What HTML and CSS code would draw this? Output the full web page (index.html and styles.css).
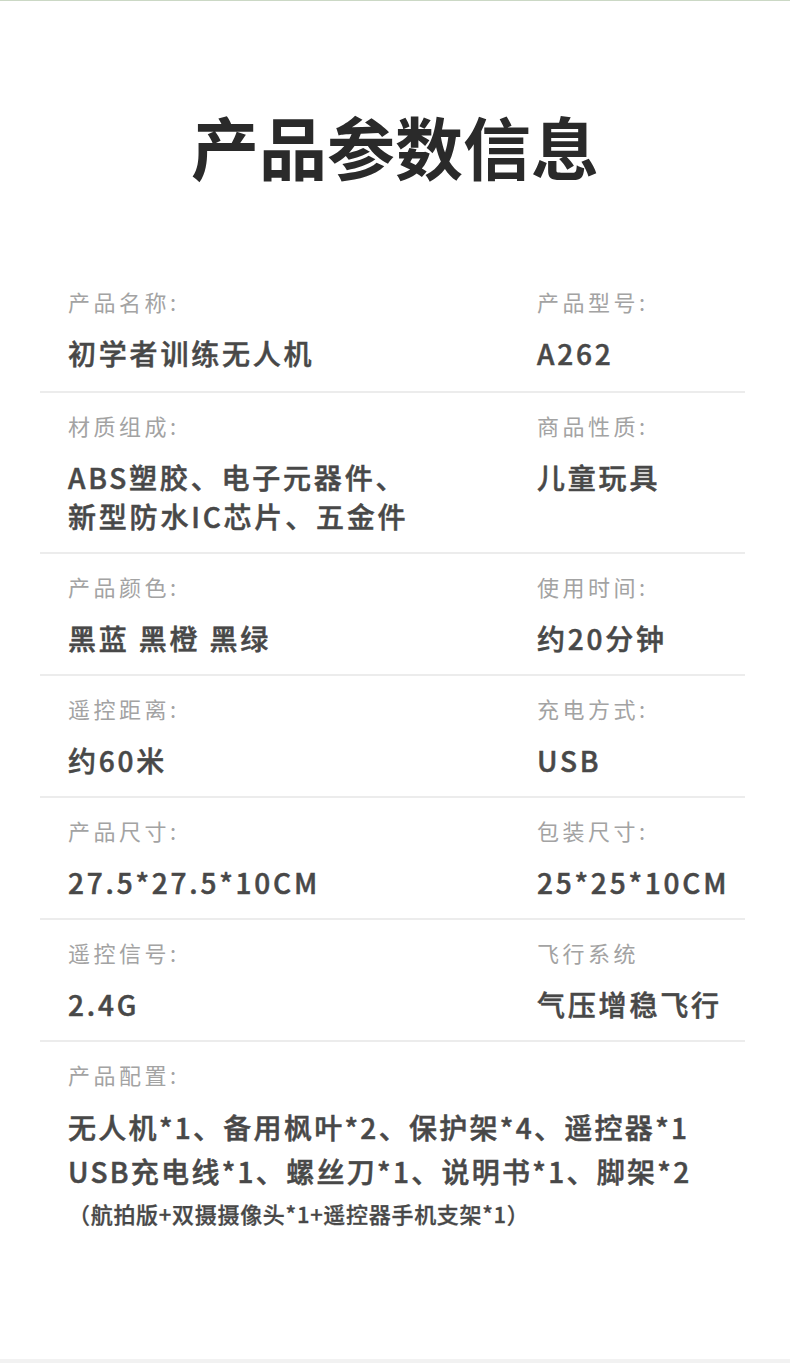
FILE: index.html
```html
<!DOCTYPE html>
<html lang="zh-CN">
<head>
<meta charset="utf-8">
<title>产品参数信息</title>
<link rel="stylesheet" href="styles.css">
</head>
<body>
<div class="page">
  <div class="top-line"></div>
  <main class="content">
    <h1 class="title">产品参数信息</h1>
    <section class="specs">
      <div class="row">
        <div class="cell"><div class="label">产品名称:</div><div class="value">初学者训练无人机</div></div>
        <div class="cell"><div class="label">产品型号:</div><div class="value">A262</div></div>
      </div>
      <div class="row">
        <div class="cell"><div class="label">材质组成:</div><div class="value">ABS塑胶、电子元器件、<br>新型防水IC芯片、五金件</div></div>
        <div class="cell"><div class="label">商品性质:</div><div class="value">儿童玩具</div></div>
      </div>
      <div class="row">
        <div class="cell"><div class="label">产品颜色:</div><div class="value">黑蓝 黑橙 黑绿</div></div>
        <div class="cell"><div class="label">使用时间:</div><div class="value">约20分钟</div></div>
      </div>
      <div class="row">
        <div class="cell"><div class="label">遥控距离:</div><div class="value">约60米</div></div>
        <div class="cell"><div class="label">充电方式:</div><div class="value">USB</div></div>
      </div>
      <div class="row">
        <div class="cell"><div class="label">产品尺寸:</div><div class="value">27.5*27.5*10CM</div></div>
        <div class="cell"><div class="label">包装尺寸:</div><div class="value">25*25*10CM</div></div>
      </div>
      <div class="row">
        <div class="cell"><div class="label">遥控信号:</div><div class="value">2.4G</div></div>
        <div class="cell"><div class="label">飞行系统</div><div class="value">气压增稳飞行</div></div>
      </div>
      <div class="row row-full">
        <div class="cell">
          <div class="label">产品配置:</div>
          <div class="config">无人机*1、备用枫叶*2、保护架*4、遥控器*1<br>USB充电线*1、螺丝刀*1、说明书*1、脚架*2</div>
          <div class="note">（航拍版+双摄摄像头*1+遥控器手机支架*1）</div>
        </div>
      </div>
    </section>
  </main>
  <div class="bottom-band"></div>
</div>
</body>
</html>
```
FILE: styles.css
```css
html, body {
  margin: 0;
  padding: 0;
  background: #ffffff;
}

body {
  font-family: "Noto Sans CJK SC", "Noto Sans", sans-serif;
}

.page {
  width: 790px;
  height: 1363px;
  display: flex;
  flex-direction: column;
  overflow: hidden;
}

.top-line {
  height: 1px;
  background: #cbd8c5;
  flex: none;
}

.content {
  flex: 1;
}

.bottom-band {
  height: 4px;
  background: #f2f2f2;
  flex: none;
}

.title {
  margin: 105px 0 0;
  height: 80px;
  line-height: 80px;
  font-size: 68px;
  font-weight: 700;
  color: #2a2a2a;
  text-align: center;
  letter-spacing: 0;
}

.specs {
  margin: 83px 45px 0 40px;
}

.row {
  display: grid;
  grid-template-columns: 469px 1fr;
  padding: 17px 0 16px 28px;
  border-top: 2px solid #ececec;
}

.row:first-child {
  border-top: none;
  padding-bottom: 18px;
}

.row-full {
  grid-template-columns: 1fr;
}

.label {
  font-size: 22px;
  line-height: 30px;
  letter-spacing: 3.5px;
  color: #a3a3a3;
  white-space: nowrap;
}

.value {
  margin-top: 18px;
  font-size: 28px;
  line-height: 39px;
  font-weight: 500;
  letter-spacing: 2.8px;
  color: #484848;
  -webkit-text-stroke: 0.5px #484848;
  white-space: nowrap;
}

.config {
  margin-top: 16px;
  font-size: 28px;
  line-height: 44px;
  font-weight: 500;
  letter-spacing: 2.3px;
  color: #484848;
  -webkit-text-stroke: 0.5px #484848;
  white-space: nowrap;
}

.note {
  margin-top: 0;
  font-size: 22px;
  line-height: 40px;
  font-weight: 500;
  letter-spacing: 0.7px;
  color: #484848;
  -webkit-text-stroke: 0.3px #484848;
  white-space: nowrap;
}
```
